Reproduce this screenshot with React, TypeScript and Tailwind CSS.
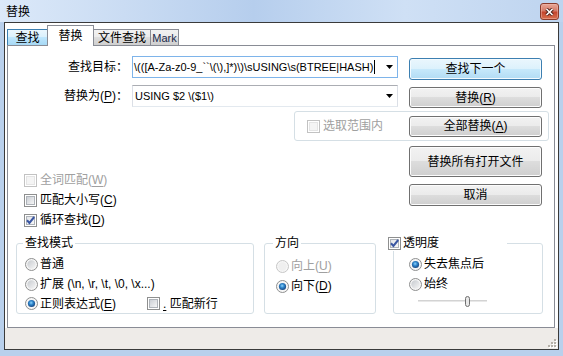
import { useId } from "react";

const FONT = "font-['Liberation_Sans','Noto_Sans_CJK_SC',sans-serif]";

function useSafeId() {
  return useId().replace(/[^a-zA-Z0-9_-]/g, "");
}

function Acc({ k }: { k: string }) {
  return (
    <>
      (<span className="underline underline-offset-[2px]">{k}</span>)
    </>
  );
}

function CheckBox({ checked = false, disabled = false }: { checked?: boolean; disabled?: boolean }) {
  const id = useSafeId();
  return (
    <svg width="13" height="13" viewBox="0 0 13 13" className="shrink-0">
      <defs>
        <linearGradient id={id} x1="0" y1="0" x2="1" y2="1">
          <stop offset="0" stopColor={disabled ? "#f4f4f4" : checked ? "#e2e4e8" : "#c9cdd3"} />
          <stop offset="1" stopColor={disabled ? "#f4f4f4" : "#f8f8f8"} />
        </linearGradient>
      </defs>
      <rect x="0.5" y="0.5" width="12" height="12" fill="#fff" stroke={disabled ? "#c2c2c2" : "#8e8f8f"} />
      <rect x="2.5" y="2.5" width="8" height="8" fill={`url(#${id})`} stroke={disabled ? "#e4e4e4" : "#aeb3b9"} />
      {checked && <path d="M3 6.3 L5.4 8.9 L10.2 3" fill="none" stroke="#3a56a2" strokeWidth="2" />}
    </svg>
  );
}

function Radio({ checked = false, disabled = false }: { checked?: boolean; disabled?: boolean }) {
  const g = useSafeId();
  const b = g + "b";
  return (
    <svg width="13" height="13" viewBox="0 0 13 13" className="shrink-0">
      <defs>
        <linearGradient id={g} x1="0" y1="0" x2="1" y2="1">
          <stop offset="0" stopColor="#c6cacf" />
          <stop offset="1" stopColor="#f6f6f6" />
        </linearGradient>
        <radialGradient id={b} cx="0.45" cy="0.4" r="0.6">
          <stop offset="0" stopColor="#8fd4fb" />
          <stop offset="0.45" stopColor="#2f86cc" />
          <stop offset="1" stopColor="#17457f" />
        </radialGradient>
      </defs>
      <circle cx="6.5" cy="6.5" r="6" fill="#f6f6f6" stroke={disabled ? "#c6c6c6" : "#8e8f8f"} />
      <circle
        cx="6.5"
        cy="6.5"
        r={checked ? 3.6 : 4.2}
        fill={checked ? `url(#${b})` : disabled ? "#efefef" : `url(#${g})`}
      />
    </svg>
  );
}

function Button({
  children,
  className = "",
  def = false,
}: {
  children: React.ReactNode;
  className?: string;
  def?: boolean;
}) {
  return (
    <div
      className={`w-[133px] shrink-0 flex items-center justify-center rounded-[3px] border ${
        def
          ? "border-[#3c7fb1] bg-[linear-gradient(#eaf6fd_0%,#dcf1fc_50%,#c7e9fb_50%,#b2dcf4_100%)] shadow-[inset_0_0_0_1px_#f4fbff]"
          : "border-[#707070] bg-[linear-gradient(#f2f2f2_0%,#ebebeb_50%,#dddddd_50%,#cfcfcf_100%)] shadow-[inset_0_0_0_1px_#fcfcfc]"
      } ${className}`}
    >
      {children}
    </div>
  );
}

function Arrow() {
  return (
    <svg width="7" height="4" viewBox="0 0 7 4" className="ml-auto shrink-0">
      <path d="M0 0 H7 L3.5 4 Z" fill="#000" />
    </svg>
  );
}

function CloseButton() {
  return (
    <div className="w-[19px] h-[17px] rounded-[3px] border border-[#8a3b2c] bg-[linear-gradient(#e9a898_0%,#d47a68_45%,#c4452e_55%,#d8704f_100%)] shadow-[inset_0_0_0_1px_#f0b7aa80] flex items-center justify-center">
      <svg width="9" height="8" viewBox="0 0 9 8">
        <path d="M1.5 1 L7.5 7 M7.5 1 L1.5 7" stroke="#4b2019" strokeWidth="3.4" />
        <path d="M1.5 1 L7.5 7 M7.5 1 L1.5 7" stroke="#ffffff" strokeWidth="1.6" />
      </svg>
    </div>
  );
}

function Grip() {
  const dots = [
    [7, 1],
    [7, 4],
    [4, 4],
    [7, 7],
    [4, 7],
    [1, 7],
  ];
  return (
    <svg width="10" height="10" viewBox="0 0 10 10">
      {dots.map(([x, y]) => (
        <g key={`${x}-${y}`}>
          <rect x={x + 1} y={y + 1} width="2" height="2" fill="#ffffff" />
          <rect x={x} y={y} width="2" height="2" fill="#b5b0a8" />
        </g>
      ))}
    </svg>
  );
}

export default function App() {
  const tabBase = "h-[16px] flex items-center justify-center border-t border-l border-r";
  return (
    <div className={`w-[563px] h-[356px] flex flex-col bg-[#b9d0ec] text-[12px] leading-[16px] text-black ${FONT}`}>
      {/* title bar */}
      <div className="h-[22px] flex items-start justify-between pl-[6px] pr-[4px] pt-[3px] bg-[linear-gradient(90deg,#dce9f9_0%,#cadcf3_22%,#b6ceed_45%,#cfe0f5_72%,#bed4ef_100%)]">
        <span className="pt-px">替换</span>
        <CloseButton />
      </div>

      {/* client */}
      <div className="mx-[4px] h-[328px] border border-[#3a3a3a] bg-white flex flex-col">
        {/* tabs */}
        <div className="h-[22px] flex items-end pl-[2px]">
          <div className={`${tabBase} w-[41px] border-[#3c7fb1] bg-[linear-gradient(#eaf6fd_0%,#d9f0fc_50%,#bee6fd_50%,#a7d9f5_100%)]`}>
            查找
          </div>
          <div className="relative z-10 -ml-px -mb-px w-[47px] h-[21px] border-t border-l border-r border-[#898c95] bg-white flex justify-center pt-[2px]">
            替换
          </div>
          <div className={`${tabBase} -ml-px w-[58px] border-[#898c95] bg-[linear-gradient(#f2f2f2_0%,#ebebeb_50%,#dddddd_50%,#cfcfcf_100%)]`}>
            文件查找
          </div>
          <div className={`${tabBase} -ml-px w-[29px] border-[#898c95] bg-[linear-gradient(#f2f2f2_0%,#ebebeb_50%,#dddddd_50%,#cfcfcf_100%)] text-[11px] text-[#1a2a4a]`}>
            Mark
          </div>
        </div>

        {/* panel */}
        <div className="ml-[2px] w-[548px] h-[283px] border border-[#898c95] bg-white flex flex-col">
          {/* find what */}
          <div className="mt-[10px] h-[29px] flex items-start">
            <div className="w-[124px] h-[22px] pr-[4px] flex items-center justify-end">查找目标：</div>
            <div className="w-[266px] h-[22px] flex items-center border border-[#7eb4ea] bg-white text-[11px] pl-px pr-[4px] overflow-hidden">
              <span className="whitespace-nowrap">{"\\(([A-Za-z0-9_``\\(\\),]*)\\)\\sUSING\\s(BTREE|HASH)"}</span>
              <span className="w-px h-[14px] bg-black ml-px shrink-0" />
              <Arrow />
            </div>
            <Button def className="ml-[11px] mt-[2px] h-[22px]">
              查找下一个
            </Button>
          </div>

          {/* replace with */}
          <div className="h-[26px] flex items-start">
            <div className="w-[124px] h-[22px] pr-[4px] flex items-center justify-end">
              替换为<Acc k="P" />：
            </div>
            <div className="w-[266px] h-[22px] flex items-center border border-[#abadb3] border-l-[#dbdfe6] border-r-[#dbdfe6] border-b-[#e3e9ef] bg-white text-[11px] pl-[2px] pr-[4px]">
              <span className="whitespace-nowrap">{"USING $2 \\($1\\)"}</span>
              <Arrow />
            </div>
            <Button className="ml-[11px] mt-[2px] h-[21px]">
              替换<Acc k="R" />
            </Button>
          </div>

          {/* in selection */}
          <div className="ml-[286px] w-[255px] h-[30px] rounded-[3px] border border-[#d5dfe5] flex items-center pl-[12px] pr-[6px]">
            <CheckBox disabled />
            <span className="ml-[3px] text-[#a0a0a0]">选取范围内</span>
            <Button className="ml-auto h-[21px]">
              全部替换<Acc k="A" />
            </Button>
          </div>

          {/* options + buttons */}
          <div className="h-[89px] flex">
            <div className="pl-[16px] pt-[29px] flex flex-col">
              <div className="h-[20px] flex items-center gap-[3px] text-[#a0a0a0]">
                <CheckBox disabled />
                <span>
                  全词匹配<Acc k="W" />
                </span>
              </div>
              <div className="h-[20px] flex items-center gap-[3px]">
                <CheckBox />
                <span>
                  匹配大小写<Acc k="C" />
                </span>
              </div>
              <div className="h-[20px] flex items-center gap-[3px]">
                <CheckBox checked />
                <span>
                  循环查找<Acc k="D" />
                </span>
              </div>
            </div>
            <div className="ml-auto mr-[12px] pt-[5px] flex flex-col gap-[7px]">
              <Button className="h-[31px]">替换所有打开文件</Button>
              <Button className="h-[22px]">取消</Button>
            </div>
          </div>

          {/* group boxes */}
          <div className="mt-[5px] pl-[8px] flex items-start">
            <fieldset className="w-[238px] h-[79px] rounded-[3px] border border-[#d5dfe5] pl-[8px]">
              <legend className="ml-[-2px] px-[2px]">查找模式</legend>
              <div className="pt-[3px] flex flex-col">
                <div className="h-[20px] flex items-center gap-[2px]">
                  <Radio />
                  <span>普通</span>
                </div>
                <div className="h-[20px] flex items-center gap-[2px]">
                  <Radio />
                  <span>扩展 {"(\\n, \\r, \\t, \\0, \\x...)"}</span>
                </div>
                <div className="h-[19px] flex items-center">
                  <div className="w-[122px] flex items-center gap-[2px]">
                    <Radio checked />
                    <span>
                      正则表达式<Acc k="E" />
                    </span>
                  </div>
                  <CheckBox />
                  <span className="ml-[3px]">
                    <span className="underline underline-offset-[2px]">.</span> 匹配新行
                  </span>
                </div>
              </div>
            </fieldset>

            <fieldset className="ml-[10px] w-[112px] h-[79px] rounded-[3px] border border-[#d5dfe5] pl-[11px]">
              <legend className="ml-[-3px] px-[2px]">方向</legend>
              <div className="pt-[5px] flex flex-col">
                <div className="h-[20px] flex items-center gap-[2px] text-[#a0a0a0]">
                  <Radio disabled />
                  <span>
                    向上<Acc k="U" />
                  </span>
                </div>
                <div className="h-[20px] flex items-center gap-[2px]">
                  <Radio checked />
                  <span>
                    向下<Acc k="D" />
                  </span>
                </div>
              </div>
            </fieldset>

            <fieldset className="ml-[17px] w-[150px] h-[79px] rounded-[3px] border border-[#d5dfe5] pl-[15px]">
              <legend className="ml-[-21px] w-[119px] bg-white flex items-center gap-[2px]">
                <CheckBox checked />
                <span>透明度</span>
              </legend>
              <div className="pt-[3px] flex flex-col">
                <div className="h-[20px] flex items-center gap-[2px]">
                  <Radio checked />
                  <span>失去焦点后</span>
                </div>
                <div className="h-[20px] flex items-center gap-[2px]">
                  <Radio />
                  <span>始终</span>
                </div>
                <svg width="72" height="11" viewBox="0 0 72 11" className="ml-[8px] mt-[2px]">
                  <line x1="1" y1="5" x2="70" y2="5" stroke="#a6a6a6" />
                  <line x1="1" y1="6" x2="70" y2="6" stroke="#ffffff" />
                  <rect x="48.5" y="0.5" width="4" height="10" rx="2" fill="#e8e8e8" stroke="#707070" />
                </svg>
              </div>
            </fieldset>
          </div>
        </div>

        {/* status bar */}
        <div className="h-[21px] bg-[#eeebe8] flex justify-end items-end pr-px pb-px">
          <Grip />
        </div>
      </div>
    </div>
  );
}
